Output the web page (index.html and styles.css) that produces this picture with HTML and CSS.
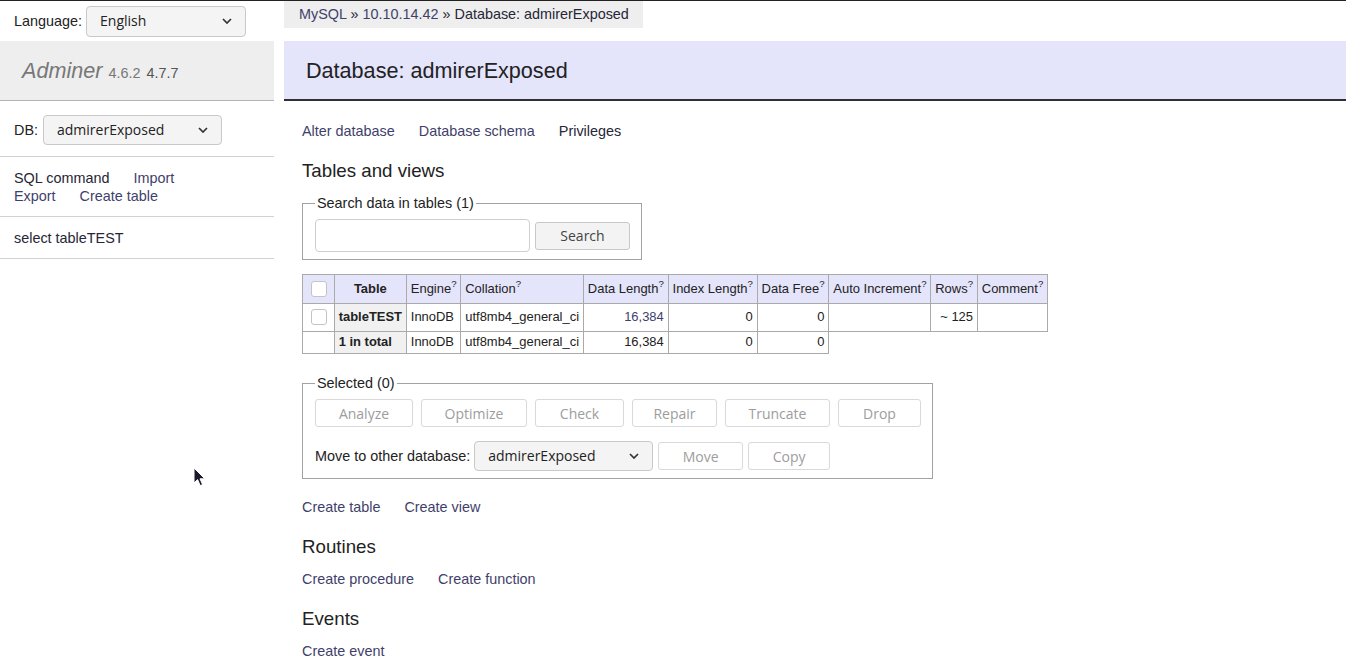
FILE: index.html
```html
<!DOCTYPE html>
<html lang="en">
<head>
<meta charset="utf-8">
<title>Database: admirerExposed - Adminer</title>
<link rel="stylesheet" href="styles.css">
</head>
<body>
<div class="page">
  <aside class="menu">
    <div class="lang-row">
      <span class="lbl">Language:</span>
      <div class="select lang-select"><span>English</span><svg class="chev" width="10" height="6" viewBox="0 0 10 6"><path d="M1 1 L5 5 L9 1" fill="none" stroke="#333" stroke-width="1.7"/></svg></div>
    </div>
    <h1 class="logo"><a class="brand" href="#">Adminer</a> <span class="version">4.6.2</span> <a class="version new" href="#">4.7.7</a></h1>
    <div class="db-row">
      <span class="lbl">DB:</span>
      <div class="select db-select"><span>admirerExposed</span><svg class="chev" width="10" height="6" viewBox="0 0 10 6"><path d="M1 1 L5 5 L9 1" fill="none" stroke="#333" stroke-width="1.7"/></svg></div>
    </div>
    <div class="menu-links">
      <div class="link-line"><a class="dark" href="#">SQL command</a><a href="#">Import</a></div>
      <div class="link-line"><a href="#">Export</a><a href="#">Create table</a></div>
    </div>
    <div class="menu-tables"><a class="dark" href="#">select tableTEST</a></div>
  </aside>

  <main class="content">
    <div class="breadcrumb"><a href="#">MySQL</a> » <a href="#">10.10.14.42</a> » Database: admirerExposed</div>
    <h2>Database: admirerExposed</h2>
    <div class="body">
      <div class="links"><a href="#">Alter database</a><a href="#">Database schema</a><a class="dark" href="#">Privileges</a></div>
      <h3>Tables and views</h3>
      <fieldset class="search-fs">
        <legend>Search data in tables (1)</legend>
        <div class="search-row">
          <input class="text-input" type="text">
          <button class="btn search-btn" type="button">Search</button>
        </div>
      </fieldset>

      <table class="tables">
        <thead>
          <tr>
            <td class="cbcell"><input class="cb" type="checkbox"></td>
            <th>Table</th>
            <td>Engine<sup>?</sup></td>
            <td>Collation<sup>?</sup></td>
            <td>Data Length<sup>?</sup></td>
            <td>Index Length<sup>?</sup></td>
            <td>Data Free<sup>?</sup></td>
            <td>Auto Increment<sup>?</sup></td>
            <td>Rows<sup>?</sup></td>
            <td>Comment<sup>?</sup></td>
          </tr>
        </thead>
        <tbody>
          <tr>
            <td class="cbcell"><input class="cb" type="checkbox"></td>
            <th>tableTEST</th>
            <td>InnoDB</td>
            <td>utf8mb4_general_ci</td>
            <td class="num"><a href="#">16,384</a></td>
            <td class="num">0</td>
            <td class="num">0</td>
            <td></td>
            <td class="num">~ 125</td>
            <td></td>
          </tr>
          <tr>
            <td></td>
            <th>1 in total</th>
            <td>InnoDB</td>
            <td>utf8mb4_general_ci</td>
            <td class="num">16,384</td>
            <td class="num">0</td>
            <td class="num">0</td>
          </tr>
        </tbody>
      </table>

      <fieldset class="sel-fs">
        <legend>Selected (0)</legend>
        <div class="btn-row">
          <button class="btn dis w-analyze" type="button">Analyze</button>
          <button class="btn dis w-optimize" type="button">Optimize</button>
          <button class="btn dis w-check" type="button">Check</button>
          <button class="btn dis w-repair" type="button">Repair</button>
          <button class="btn dis w-truncate" type="button">Truncate</button>
          <button class="btn dis w-drop" type="button">Drop</button>
        </div>
        <div class="move-row">
          <span class="lbl">Move to other database:</span>
          <div class="select move-select"><span>admirerExposed</span><svg class="chev" width="10" height="6" viewBox="0 0 10 6"><path d="M1 1 L5 5 L9 1" fill="none" stroke="#333" stroke-width="1.7"/></svg></div>
          <button class="btn dis small w-move" type="button">Move</button>
          <button class="btn dis small w-copy" type="button">Copy</button>
        </div>
      </fieldset>

      <div class="links after-fs"><a href="#">Create table</a><a href="#">Create view</a></div>
      <h3 class="h-gap">Routines</h3>
      <div class="links sub"><a href="#">Create procedure</a><a href="#">Create function</a></div>
      <h3 class="h-gap">Events</h3>
      <div class="links sub last"><a href="#">Create event</a></div>
    </div>
  </main>
</div>
<svg class="cursor" width="13" height="20" viewBox="0 0 13 20"><path d="M1 1 L1 16 L4.6 12.6 L7.2 18.6 L9.6 17.6 L7 11.8 L11.8 11.8 Z" fill="#1a1a2a" stroke="#fff" stroke-width="1"/></svg>
</body>
</html>
```

FILE: styles.css
```css
* { box-sizing: border-box; }
html, body { margin: 0; padding: 0; }
body {
  font-family: "Liberation Sans", Arial, sans-serif;
  font-size: 14.4px;
  line-height: 1.25;
  color: #222;
  background: #fff;
  border-top: 1px solid #222;
  position: relative;
}
a { color: #3f3f6b; text-decoration: none; }
a.dark { color: #262636; }

.page { display: flex; align-items: flex-start; }

/* sidebar */
.menu { width: 274px; flex: none; }
.lang-row { display: flex; align-items: center; gap: 4px; height: 40px; padding: 0 14px; }
.select {
  display: flex; align-items: center; justify-content: space-between;
  background: #f4f4f4; border: 1px solid #c9c9c9; border-radius: 4px;
  font-family: "Open Sans", sans-serif; font-size: 14px; color: #222;
  padding: 0 13px 0 13px;
}
.chev { flex: none; }
.lang-select { width: 160px; height: 31px; }
.logo {
  margin: 0; background: #eee; height: 60px; padding: 0 22px;
  border-bottom: 1px solid #b4b4b4; font-size: 21.6px; font-weight: normal; line-height: 60px;
}
.brand { color: #777; font-style: italic; }
.version { color: #777; font-size: 14.4px; }
.version.new { color: #555; }
.db-row { display: flex; align-items: center; gap: 5px; height: 56px; padding: 2px 14px 0; border-bottom: 1px solid #d2d2d2; }
.db-select { width: 179px; height: 30px; }
.menu-links { padding: 12px 14px 11px; border-bottom: 1px solid #d2d2d2; }
.link-line { display: flex; gap: 24px; }
.menu-tables { padding: 12px 14px 11px; border-bottom: 1px solid #d2d2d2; }

/* content */
.content { flex: 1; margin-left: 10px; min-width: 0; }
.breadcrumb { display: inline-block; background: #eee; height: 27px; line-height: 27px; padding: 0 14px 0 15px; color: #262636; }
h2 {
  margin: 13px 0 21px; background: #e4e4fb; height: 60px; padding: 0 22px;
  line-height: 59px; font-size: 21.6px; font-weight: normal; color: #222;
  border-bottom: 2px solid #2e2e36;
}
.body { padding-left: 18px; }
.links { display: flex; gap: 24px; }
h3 { font-size: 18.72px; font-weight: normal; margin: 19px 0 0; color: #222; }

fieldset {
  display: block; width: fit-content; border: 1px solid #a2a2a2;
  margin: 12px 0 0; padding: 7px 11px 7px 12px; min-width: 0;
}
legend { padding: 0 2px; }
.search-row { display: flex; align-items: center; gap: 5px; }
.text-input { width: 215px; height: 33px; border: 1px solid #cfcfcf; border-radius: 4px; background: #fff; margin: 0; }
.btn {
  font-family: "Open Sans", sans-serif; font-size: 14px; height: 28px;
  padding: 0; border: 1px solid #c8c8c8; border-radius: 3px;
  background: #f3f3f3; color: #444; margin: 0;
}
.search-btn { width: 95px; }
.btn.dis { background: #fff; border-color: #d9d9d9; color: #9d9d9d; }
.w-analyze { width: 98px; }
.w-optimize { width: 106px; }
.w-check { width: 89px; }
.w-repair { width: 85px; }
.w-truncate { width: 105px; }
.w-drop { width: 83px; }
.w-move { width: 85px; }
.w-copy { width: 82px; }

table.tables { border-collapse: collapse; margin-top: 14px; font-size: 12.96px; }
.tables td, .tables th { border: 1px solid #aaa; padding: 2.6px 3.9px; white-space: nowrap; text-align: left; }
.tables th { text-align: center; font-weight: bold; }
.tables tbody th { background: #f1f1f1; text-align: left; }
.tables thead td, .tables thead th { background: #e4e4fb; }
.tables td.num { text-align: right; }
.tables sup { font-size: 9.6px; line-height: 0; vertical-align: 6px; }
.cbcell { padding: 2.6px 3.9px; }
.cb {
  appearance: none; -webkit-appearance: none; display: block;
  width: 16px; height: 16px; margin: 3px 3px 3px 4px;
  border: 1px solid #c4c4c4; border-radius: 3px; background: #fff;
}

.sel-fs { margin-top: 20px; }
.btn-row { display: flex; gap: 8px; }
.move-row { display: flex; align-items: center; gap: 5px; margin-top: 14px; }
.move-row .lbl { margin-right: -1px; }
.move-select { width: 179px; height: 30px; }
.btn.small { height: 28px; }

.after-fs { margin-top: 19px; }
.h-gap { margin-top: 19px; }
.links.sub { margin-top: 11px; }
.links.sub.last { margin-top: 12px; }

.cursor { position: absolute; left: 193px; top: 466px; }
```
